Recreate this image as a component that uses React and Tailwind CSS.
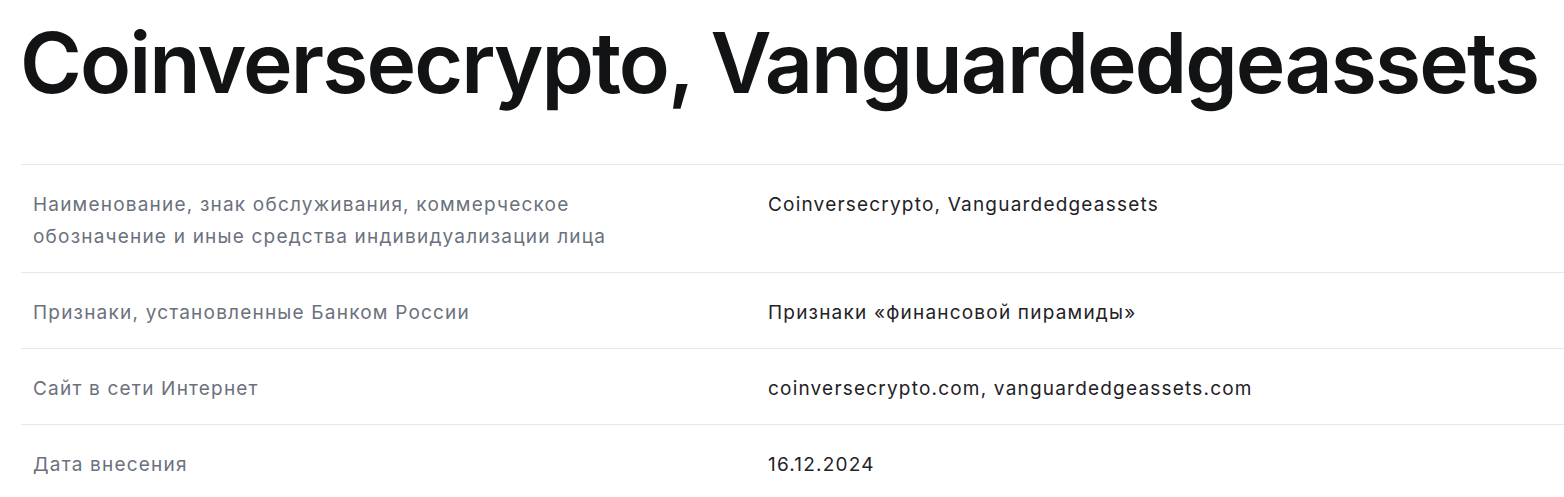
export default function App() {
  const rows = [
    {
      label: "Наименование, знак обслуживания, коммерческое обозначение и иные средства индивидуализации лица",
      value: "Coinversecrypto, Vanguardedgeassets",
    },
    { label: "Признаки, установленные Банком России", value: "Признаки «финансовой пирамиды»" },
    { label: "Сайт в сети Интернет", value: "coinversecrypto.com, vanguardedgeassets.com" },
    { label: "Дата внесения", value: "16.12.2024" },
  ];

  return (
    <div className="min-h-screen bg-white pl-[21px] font-['Inter',sans-serif]">
      <h1 className="pt-[7px] pb-[45px] -ml-[1px] text-[84px] leading-[112px] font-semibold tracking-[-0.023em] text-[#121314]">
        Coinversecrypto, Vanguardedgeassets
      </h1>
      <div className="border-t border-[#e8e8e8]">
        {rows.map((row) => (
          <div key={row.label} className="grid grid-cols-[735px_1fr] border-b border-[#e8e8e8] pt-6 pb-[19px] text-[19px] leading-8 tracking-[1.2px]">
            <div className="px-3 pr-24 text-[#6b717d]">{row.label}</div>
            <div className="px-3 text-[#1f2226]">{row.value}</div>
          </div>
        ))}
      </div>
    </div>
  );
}
